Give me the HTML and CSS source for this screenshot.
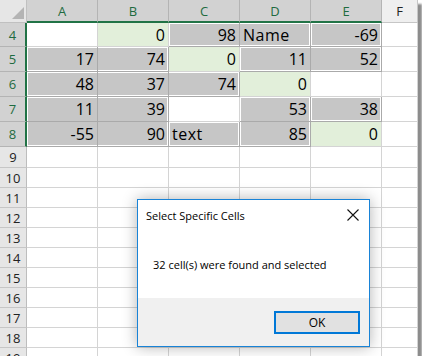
FILE: index.html
```html
<!DOCTYPE html>
<html lang="en">
<head>
    <meta charset="UTF-8">
    <meta name="viewport" content="width=device-width, initial-scale=1.0">
    <title>Select Specific Cells</title>
    <link rel="stylesheet" href="styles.css">
</head>
<body>

    <div class="sheet">
        <div class="grid">
            <!-- column headers -->
            <div class="corner"><span class="tri"></span></div>
            <div class="colhead on">A</div>
            <div class="colhead on">B</div>
            <div class="colhead on">C</div>
            <div class="colhead on">D</div>
            <div class="colhead on">E</div>
            <div class="colhead">F</div>

            <!-- row 4 -->
            <div class="rowhead on">4</div>
            <div class="cell"></div>
            <div class="cell green">0</div>
            <div class="cell sel t b l">98</div>
            <div class="cell sel t b r txt">Name</div>
            <div class="cell sel t b l r">-69</div>
            <div class="cell"></div>

            <!-- row 5 -->
            <div class="rowhead on">5</div>
            <div class="cell sel t b l">17</div>
            <div class="cell sel t b r">74</div>
            <div class="cell green">0</div>
            <div class="cell sel t b l">11</div>
            <div class="cell sel t b r">52</div>
            <div class="cell"></div>

            <!-- row 6 -->
            <div class="rowhead on">6</div>
            <div class="cell sel t b l">48</div>
            <div class="cell sel t b">37</div>
            <div class="cell sel t b r">74</div>
            <div class="cell green">0</div>
            <div class="cell"></div>
            <div class="cell"></div>

            <!-- row 7 -->
            <div class="rowhead on">7</div>
            <div class="cell sel t l">11</div>
            <div class="cell sel t r">39</div>
            <div class="cell"></div>
            <div class="cell sel t l r">53</div>
            <div class="cell sel t b l r">38</div>
            <div class="cell"></div>

            <!-- row 8 -->
            <div class="rowhead on">8</div>
            <div class="cell sel b l">-55</div>
            <div class="cell sel b r">90</div>
            <div class="cell sel t b l r txt">text</div>
            <div class="cell sel b l r">85</div>
            <div class="cell green">0</div>
            <div class="cell"></div>
        </div>
        <div class="grid rest" id="emptyRows"></div>

        <div class="dialog">
            <div class="dlg-title">
                <span>Select Specific Cells</span>
                <svg class="dlg-close" width="12" height="12" viewBox="0 0 12 12">
                    <path d="M0.5 0.5 L11.5 11.5 M11.5 0.5 L0.5 11.5" stroke="#111" stroke-width="1.1" fill="none"/>
                </svg>
            </div>
            <div class="dlg-body">32 cell(s) were found and selected</div>
            <div class="dlg-foot">
                <button class="btn-ok">OK</button>
            </div>
        </div>
    </div>

    <script>
        // empty rows 9 - 19 under the data
        const rest = document.getElementById('emptyRows');
        for (let r = 9; r <= 19; r++) {
            let html = `<div class="rowhead">${r}</div>`;
            for (let c = 0; c < 6; c++) {
                html += '<div class="cell"></div>';
            }
            rest.innerHTML += html;
        }
    </script>

</body>
</html>
```

FILE: styles.css
```css
body {
    margin: 0;
    background: #fff;
    font-family: "Open Sans", Arial, sans-serif;
}
.sheet {
    position: relative;
    width: 418px;
    height: 356px;
    overflow: hidden;
    background: #fff;
    box-shadow: 4px 4px 2px #8c8c8c;
}
.grid {
    display: grid;
    grid-template-columns: 27px repeat(5, 71px) 1fr;
    grid-template-rows: 23px 24px repeat(4, 25px);
}
.grid.rest {
    grid-template-rows: 21px;
    grid-auto-rows: 20px;
}
.grid > div {
    box-sizing: border-box;
}
.corner {
    background: #e6e6e6;
    border-right: 1px solid #c0c0c0;
    border-bottom: 1px solid #c0c0c0;
    display: flex;
    align-items: flex-end;
    justify-content: flex-end;
    padding: 0 2px 3px 0;
}
.tri {
    width: 0;
    height: 0;
    border-left: 12px solid transparent;
    border-bottom: 12px solid #b4b4b4;
}
.colhead {
    background: #efefef;
    border-right: 1px solid #c6c6c6;
    border-bottom: 1px solid #c6c6c6;
    color: #222;
    font-size: 13px;
    display: flex;
    align-items: center;
    justify-content: center;
}
.colhead.on {
    background: #d2d2d2;
    color: #1e6b40;
    border-bottom: 2px solid #217346;
    border-right-color: #b4b4b4;
}
.rowhead {
    background: #e6e6e6;
    border-right: 1px solid #bdbdbd;
    border-bottom: 1px solid #c6c6c6;
    color: #222;
    font-size: 13px;
    display: flex;
    align-items: center;
    justify-content: center;
}
.rowhead.on {
    background: #d2d2d2;
    color: #1e6b40;
    border-right: 2px solid #217346;
    border-bottom-color: #b4b4b4;
}
.cell {
    border-right: 1px solid #d4d4d4;
    border-bottom: 1px solid #d4d4d4;
    font-size: 16px;
    color: #000;
    display: flex;
    align-items: center;
    justify-content: flex-end;
    padding: 0 3px;
    --ft: 0 0 transparent;
    --fb: 0 0 transparent;
    --fl: 0 0 transparent;
    --fr: 0 0 transparent;
    box-shadow: var(--ft), var(--fb), var(--fl), var(--fr);
}
.cell.txt {
    justify-content: flex-start;
    letter-spacing: 0.5px;
}
.green {
    background: #e2efda;
}
.sel {
    background: #c6c6c6;
    border-color: #aaaaaa;
}
/* white frame round each selected range */
.t { --ft: inset 0 1px #fff; }
.b { --fb: inset 0 -1px #fff; }
.l { --fl: inset 1px 0 #fff; }
.r { --fr: inset -1px 0 #fff; }

.dialog {
    position: absolute;
    left: 137px;
    top: 199px;
    width: 233px;
    height: 148px;
    box-sizing: border-box;
    border: 1px solid #1883d7;
    background: #fff;
    box-shadow: 0 0 14px rgba(0, 0, 0, 0.3);
    display: flex;
    flex-direction: column;
    font-size: 11px;
    color: #000;
}
.dlg-title {
    height: 30px;
    display: flex;
    align-items: center;
    justify-content: space-between;
    padding: 0 10px 0 8px;
}
.dlg-body {
    flex: 1;
    display: flex;
    align-items: center;
    padding-left: 15px;
}
.dlg-foot {
    height: 48px;
    background: #f0f0f0;
    display: flex;
    justify-content: flex-end;
    align-items: flex-start;
    padding: 13px 9px 0 0;
    box-sizing: border-box;
}
.btn-ok {
    width: 86px;
    height: 23px;
    border: 2px solid #0078d7;
    background: #e1e1e1;
    font-family: inherit;
    font-size: 12px;
    color: #000;
    padding: 0;
}
```
